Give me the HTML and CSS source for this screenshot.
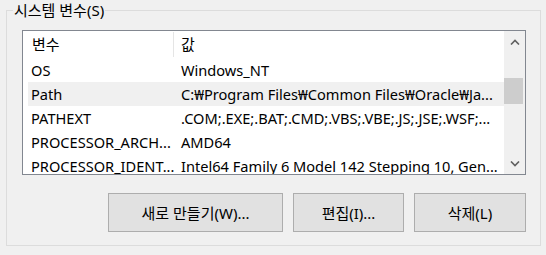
FILE: index.html
```html
<!DOCTYPE html>
<html lang="ko">
<head>
<meta charset="utf-8">
<link rel="stylesheet" href="styles.css">
</head>
<body>
<div class="group">
  <span class="legend">시스템 변수(S)</span>
  <div class="list">
    <div class="table">
      <div class="header">
        <div class="c1 hcell">변수</div>
        <div class="sep"></div>
        <div class="c2 hcell">값</div>
      </div>
      <div class="row"><div class="c1">OS</div><div class="c2">Windows_NT</div></div>
      <div class="row sel"><div class="c1">Path</div><div class="c2">C:₩Program Files₩Common Files₩Oracle₩Ja...</div></div>
      <div class="row"><div class="c1">PATHEXT</div><div class="c2">.COM;.EXE;.BAT;.CMD;.VBS;.VBE;.JS;.JSE;.WSF;...</div></div>
      <div class="row"><div class="c1">PROCESSOR_ARCH...</div><div class="c2">AMD64</div></div>
      <div class="row"><div class="c1">PROCESSOR_IDENT...</div><div class="c2">Intel64 Family 6 Model 142 Stepping 10, Gen...</div></div>
    </div>
    <div class="scrollbar">
      <div class="arrow"><svg width="10" height="6" viewBox="0 0 10 6"><path d="M1 5.5 L5 1.5 L9 5.5" fill="none" stroke="#606060" stroke-width="1.6"/></svg></div>
      <div class="track"><div class="thumb"></div></div>
      <div class="arrow"><svg width="10" height="6" viewBox="0 0 10 6"><path d="M1 0.5 L5 4.5 L9 0.5" fill="none" stroke="#606060" stroke-width="1.6"/></svg></div>
    </div>
  </div>
  <div class="buttons">
    <button class="btn w1">새로 만들기(W)...</button>
    <button class="btn w2">편집(I)...</button>
    <button class="btn w3">삭제(L)</button>
  </div>
</div>
</body>
</html>
```
FILE: styles.css
```css
html, body {
  margin: 0;
  padding: 0;
  background: #f0f0f0;
  width: 546px;
  height: 255px;
  overflow: hidden;
}
body {
  font-family: "Noto Sans", "Noto Sans CJK KR", sans-serif;
  font-size: 15px;
  color: #000;
}
.group {
  position: relative;
  box-sizing: border-box;
  margin: 10px 0 0 6px;
  width: 535px;
  height: 236px;
  border: 1px solid #dcdcdc;
  padding: 19px 14px 0 15px;
  display: flex;
  flex-direction: column;
}
.legend {
  position: absolute;
  left: 6px;
  top: -11px;
  padding: 0 1px;
  background: #f0f0f0;
  line-height: 20px;
  font-size: 15px;
}
.list {
  box-sizing: border-box;
  height: 145px;
  border: 1px solid #828790;
  background: #fff;
  display: flex;
}
.table {
  flex: 1;
  overflow: hidden;
  font-size: 14.6px;
}
.header {
  display: flex;
  height: 27px;
  align-items: center;
  font-size: 15px;
}
.hcell {
  line-height: 27px;
}
.sep {
  width: 1px;
  height: 25px;
  background: #e5e5e5;
  margin-top: 1px;
  align-self: flex-start;
}
.header .c1 {
  width: 141px;
  padding-left: 9px;
}
.header .c2 {
  padding-left: 7px;
}
.row {
  display: flex;
  height: 24px;
  line-height: 25px;
  margin-left: 5px;
  white-space: nowrap;
}
.row.sel {
  background: #f0f0f0;
}
.row .c1 {
  flex: none;
  width: 145px;
  padding-left: 3px;
  box-sizing: border-box;
}
.row .c2 {
  padding-left: 8px;
}
.scrollbar {
  width: 21px;
  background: #f0f0f0;
  display: flex;
  flex-direction: column;
}
.arrow {
  height: 21px;
  display: flex;
  align-items: center;
  justify-content: center;
}
.track {
  flex: 1;
}
.thumb {
  margin-top: 26px;
  height: 26px;
  width: 19px;
  background: #cdcdcd;
}
.buttons {
  display: flex;
  justify-content: flex-end;
  gap: 10px;
  margin-top: 18px;
}
.btn {
  box-sizing: border-box;
  height: 39px;
  border: 1px solid #adadad;
  background: #e1e1e1;
  font-family: "Noto Sans", "Noto Sans CJK KR", sans-serif;
  font-size: 15px;
  color: #000;
  padding: 0;
}
.w1 { width: 175px; }
.w2 { width: 111px; }
.w3 { width: 112px; }
```
